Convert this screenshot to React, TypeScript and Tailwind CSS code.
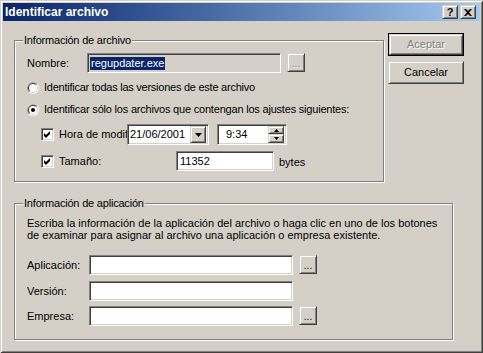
import React from "react";

const raised =
  "bg-[#d4d0c8] border border-t-[#d4d0c8] border-l-[#d4d0c8] border-b-[#404040] border-r-[#404040] shadow-[inset_1px_1px_#ffffff,inset_-1px_-1px_#808080]";
const sunken =
  "border border-t-[#808080] border-l-[#808080] border-b-white border-r-white shadow-[inset_1px_1px_#404040,inset_-1px_-1px_#d4d0c8]";
const etched =
  "relative border border-[#808080] shadow-[1px_1px_0_#ffffff,inset_1px_1px_0_#ffffff]";

function Radio({ checked }: { checked?: boolean }) {
  return (
    <svg width="12" height="12" viewBox="0 0 12 12" className="shrink-0">
      <circle cx="6" cy="6" r="6" fill="#ffffff" />
      <path d="M1.76 10.24 A6 6 0 0 1 10.24 1.76 Z" fill="#808080" />
      <circle cx="6" cy="6" r="5" fill="#d4d0c8" />
      <path d="M2.46 9.54 A5 5 0 0 1 9.54 2.46 Z" fill="#404040" />
      <circle cx="6" cy="6" r="4" fill="#ffffff" />
      {checked && <circle cx="6" cy="6" r="2" fill="#000000" />}
    </svg>
  );
}

function Check() {
  return (
    <div className={`${sunken} bg-white w-[13px] h-[13px] shrink-0 relative`}>
      <svg width="13" height="13" viewBox="0 0 13 13" className="absolute left-[-1px] top-[-1px]">
        <path d="M3 5 L5 7 L9 3 L9 6 L5 10 L3 8 Z" fill="#000000" />
      </svg>
    </div>
  );
}

function Browse({ disabled }: { disabled?: boolean }) {
  return (
    <div
      className={`${raised} w-[18px] h-[19px] shrink-0 flex items-end justify-center pb-[2px] text-[10px] leading-[10px] ${
        disabled ? "text-[#808080] [text-shadow:1px_1px_0_#ffffff]" : "text-black"
      }`}
    >
      ...
    </div>
  );
}

function Label({ w, children }: { w: number; children: React.ReactNode }) {
  return (
    <div className="shrink-0 whitespace-nowrap overflow-hidden" style={{ width: w }}>
      {children}
    </div>
  );
}

export default function App() {
  return (
    <div className="w-[483px] h-[353px] bg-[#d4d0c8] p-[3px] flex flex-col shadow-[inset_1px_1px_#d4d0c8,inset_-1px_-1px_#404040,inset_2px_2px_#ffffff,inset_-2px_-2px_#808080] font-['Liberation_Sans',Arial,sans-serif] text-[11px] leading-[13px] text-black select-none">
      {/* Title bar */}
      <div className="h-[18px] flex items-center bg-linear-to-r from-[#0a246a] to-[#a6caf0] pl-[2px] pr-[4px]">
        <span className="flex-1 font-bold text-white text-[12px] leading-[14px] whitespace-nowrap">
          Identificar archivo
        </span>
        <div className={`${raised} w-[16px] h-[14px] flex items-center justify-center font-bold text-[11px] leading-[11px]`}>
          ?
        </div>
        <div className={`${raised} ml-[2px] w-[16px] h-[14px] flex items-center justify-center`}>
          <svg width="8" height="7" viewBox="0 0 8 7">
            <path d="M0 0 L2 0 L4 2 L6 0 L8 0 L5 3.5 L8 7 L6 7 L4 5 L2 7 L0 7 L3 3.5 Z" fill="#000000" />
          </svg>
        </div>
      </div>

      {/* Body */}
      <div className="flex-1 flex flex-col">
        <div className="flex items-start">
          {/* Group 1 */}
          <div className={`${etched} ml-[11px] mt-[19px] w-[370px] h-[142px]`}>
            <span className="absolute left-[8px] top-[-7px] bg-[#d4d0c8] px-[1px] leading-[13px] tracking-[-0.2px]">
              Información de archivo
            </span>
            <div className="flex flex-col pl-[12px] pt-[12px]">
              <div className="flex items-center h-[20px]">
                <Label w={60}>Nombre:</Label>
                <div className={`${sunken} bg-[#d4d0c8] w-[194px] h-[20px] flex items-center pl-[2px]`}>
                  <span className="bg-[#0a246a] text-white px-[1px]">regupdater.exe</span>
                </div>
                <div className="ml-[6px] self-start">
                  <Browse disabled />
                </div>
              </div>
              <div className="flex items-center h-[13px] mt-[8px]">
                <Radio />
                <span className="ml-[5px] whitespace-nowrap tracking-[-0.25px]">
                  Identificar todas las versiones de este archivo
                </span>
              </div>
              <div className="flex items-center h-[13px] mt-[9px]">
                <Radio checked />
                <span className="ml-[5px] whitespace-nowrap tracking-[-0.2px]">
                  Identificar sólo los archivos que contengan los ajustes siguientes:
                </span>
              </div>
              <div className="flex items-center h-[21px] mt-[8px] pl-[14px]">
                <Check />
                <div className="ml-[5px]">
                  <Label w={68}>Hora de modif</Label>
                </div>
                <div className={`${sunken} bg-white w-[82px] h-[21px] flex items-center justify-between pl-[2px] pr-[2px]`}>
                  <span>21/06/2001</span>
                  <div className={`${raised} w-[16px] h-[17px] flex items-center justify-center`}>
                    <svg width="7" height="4" viewBox="0 0 7 4">
                      <path d="M0 0 L7 0 L3.5 4 Z" fill="#000000" />
                    </svg>
                  </div>
                </div>
                <div className={`${sunken} bg-white ml-[8px] w-[70px] h-[21px] flex items-center justify-between pl-[8px] pr-[2px]`}>
                  <span>9:34</span>
                  <div className="flex flex-col">
                    <div className={`${raised} w-[16px] h-[8px] flex items-center justify-center`}>
                      <svg width="5" height="3" viewBox="0 0 5 3">
                        <path d="M0 3 L5 3 L2.5 0 Z" fill="#000000" />
                      </svg>
                    </div>
                    <div className={`${raised} w-[16px] h-[9px] flex items-center justify-center`}>
                      <svg width="5" height="3" viewBox="0 0 5 3">
                        <path d="M0 0 L5 0 L2.5 3 Z" fill="#000000" />
                      </svg>
                    </div>
                  </div>
                </div>
              </div>
              <div className="flex items-center h-[20px] mt-[6px] pl-[14px]">
                <Check />
                <div className="ml-[5px]">
                  <Label w={117}>Tamaño:</Label>
                </div>
                <div className={`${sunken} bg-white w-[98px] h-[20px] flex items-center pl-[3px]`}>
                  <span>11352</span>
                </div>
                <span className="ml-[5px] pt-[3px]">bytes</span>
              </div>
            </div>
          </div>

          {/* Buttons */}
          <div className="ml-[4px] mt-[12px] flex flex-col">
            <div className="border border-black w-[76px] h-[23px]">
              <div className={`${raised} w-full h-full flex items-center justify-center text-[#808080] [text-shadow:1px_1px_0_#ffffff]`}>
                Aceptar
              </div>
            </div>
            <div className={`${raised} mt-[5px] w-[76px] h-[23px] flex items-center justify-center`}>
              Cancelar
            </div>
          </div>
        </div>

        {/* Group 2 */}
        <div className={`${etched} ml-[11px] mt-[21px] w-[439px] h-[137px]`}>
          <span className="absolute left-[8px] top-[-7px] bg-[#d4d0c8] px-[1px] leading-[13px] tracking-[-0.2px]">
            Información de aplicación
          </span>
          <div className="flex flex-col pl-[12px] pt-[13px]">
            <p className="leading-[12px] whitespace-nowrap">
              Escriba la información de la aplicación del archivo o haga clic en uno de los botones
              <br />
              de examinar para asignar al archivo una aplicación o empresa existente.
            </p>
            <div className="flex items-start mt-[14px]">
              <div className="h-[20px] flex items-center">
                <Label w={62}>Aplicación:</Label>
              </div>
              <div className={`${sunken} bg-white w-[204px] h-[20px]`} />
              <div className="ml-[6px]">
                <Browse />
              </div>
            </div>
            <div className="flex items-start mt-[6px]">
              <div className="h-[20px] flex items-center">
                <Label w={62}>Versión:</Label>
              </div>
              <div className={`${sunken} bg-white w-[204px] h-[20px]`} />
            </div>
            <div className="flex items-start mt-[5px]">
              <div className="h-[20px] flex items-center">
                <Label w={62}>Empresa:</Label>
              </div>
              <div className={`${sunken} bg-white w-[204px] h-[20px]`} />
              <div className="ml-[6px]">
                <Browse />
              </div>
            </div>
          </div>
        </div>
      </div>
    </div>
  );
}
